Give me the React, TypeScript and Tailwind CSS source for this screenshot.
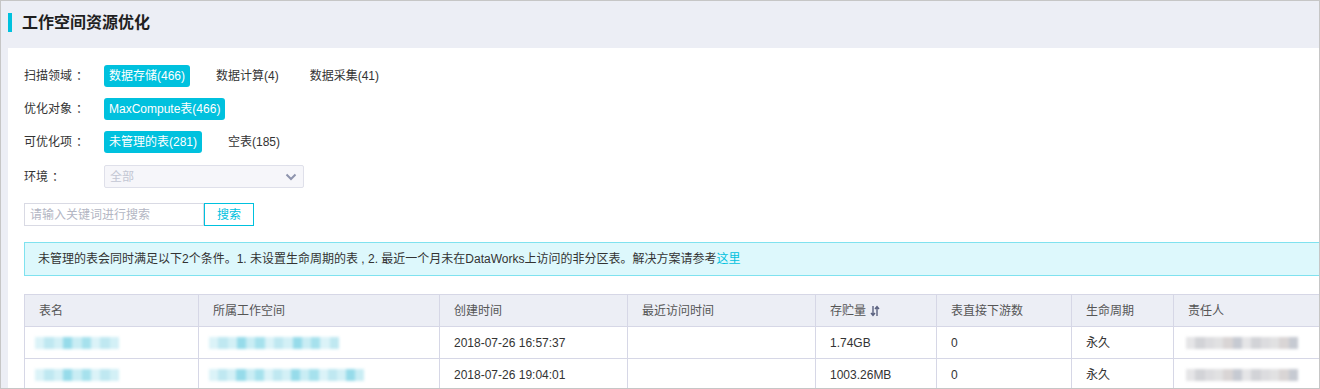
import React from 'react';

const filters = [
  { label: '扫描领域', tags: ['数据存储(466)', '数据计算(4)', '数据采集(41)'] },
  { label: '优化对象', tags: ['MaxCompute表(466)'] },
  { label: '可优化项', tags: ['未管理的表(281)', '空表(185)'] },
];

const columns = [
  { title: '表名', width: 174 },
  { title: '所属工作空间', width: 241 },
  { title: '创建时间', width: 188 },
  { title: '最近访问时间', width: 188 },
  { title: '存贮量', width: 121, sort: true },
  { title: '表直接下游数', width: 135 },
  { title: '生命周期', width: 102 },
  { title: '责任人', width: 260 },
];

const rows = [
  { created: '2018-07-26 16:57:37', size: '1.74GB', name: 84, space: 130, owner: 112 },
  { created: '2018-07-26 19:04:01', size: '1003.26MB', name: 84, space: 155, owner: 112 },
];

// 打码的内容，用模糊色块代替
function Blurred({ width, tone }: { width: number; tone: 'cyan' | 'gray' }) {
  const shades =
    tone === 'cyan'
      ? ['#d3f0f6', '#bfe8f1', '#dbf3f8', '#a6e1ed', '#c9edf4', '#96dbea']
      : ['#dcdcdf', '#d2d3d7', '#e5e5e7', '#c6cad2', '#d9d5d5', '#e1e1e2'];
  const n = Math.round(width / 9);
  return (
    <div className="flex h-[12px] blur-[1.5px]" style={{ width }}>
      {Array.from({ length: n }).map((_, i) => (
        <div key={i} className="h-full flex-1" style={{ background: shades[(i * 5 + 2) % shades.length] }} />
      ))}
    </div>
  );
}

function SortIcon() {
  return (
    <svg className="ml-[4px] h-[12px] w-[10px]" viewBox="0 0 10 12" fill="none" stroke="#5b6280" strokeWidth="1.4">
      <path d="M3 1v9M1 8l2 2.5L5 8" />
      <path d="M7 11V2M5 4l2-2.5L9 4" />
    </svg>
  );
}

function Label({ text }: { text: string }) {
  return (
    <span className="flex w-[80px]">
      {text}
      <span className="ml-[4px]">：</span>
    </span>
  );
}

export default function App() {
  return (
    <div className="h-[389px] w-[1320px] overflow-hidden border border-[#c6c6c6] bg-[#eceef5] font-['Liberation_Sans','Noto_Sans_CJK_SC',sans-serif] text-[12px] text-[#333]">
      <header className="flex h-[47px] items-start">
        <span className="ml-[7px] mt-[12px] h-[19px] w-[4px] bg-[#00c1de]" />
        <h1 className="ml-[10px] mt-[12px] text-[16px] font-bold leading-[19px] text-[#1f1f1f]">工作空间资源优化</h1>
      </header>

      <main className="ml-[7px] h-[340px] bg-white pl-[16px] pt-[17px]">
        {filters.map((f, i) => (
          <div key={f.label} className={`flex h-[22px] items-center ${i > 0 ? 'mt-[11px]' : ''}`}>
            <Label text={f.label} />
            <div className="flex items-center gap-[21px]">
              {f.tags.map((t, j) => (
                <span
                  key={t}
                  className={
                    j === 0
                      ? 'flex h-[22px] items-center rounded-[3px] bg-[#00c1de] px-[5px] text-white'
                      : 'flex h-[22px] items-center px-[5px] text-[#333]'
                  }
                >
                  {t}
                </span>
              ))}
            </div>
          </div>
        ))}

        <div className="mt-[12px] flex h-[23px] items-center">
          <Label text="环境" />
          <div className="flex h-[23px] w-[200px] items-center justify-between rounded-[2px] border border-[#dfe0ea] bg-[#f6f6fa] pl-[5px] pr-[6px] text-[#c3c6d3]">
            <span>全部</span>
            <svg className="h-[8px] w-[12px]" viewBox="0 0 12 8" fill="none" stroke="#8e94ad" strokeWidth="2">
              <path d="M1.5 1.5L6 6l4.5-4.5" />
            </svg>
          </div>
        </div>

        <div className="mt-[15px] flex h-[23px]">
          <div className="flex w-[180px] items-center border border-[#d9dae4] pl-[5px] text-[#b3b6c3]">请输入关键词进行搜索</div>
          <button type="button" className="w-[50px] border border-[#00c1de] text-[#00c1de]">
            搜索
          </button>
        </div>

        <div className="mt-[16px] flex h-[34px] w-[1320px] items-center border border-[#7fe2ef] bg-[#ddf8fc] pl-[13px]">
          未管理的表会同时满足以下2个条件。1. 未设置生命周期的表 , 2. 最近一个月未在DataWorks上访问的非分区表。解决方案请参考
          <a href="#" className="text-[#00c1de]">这里</a>
        </div>

        <table className="mt-[18px] table-fixed border-collapse" style={{ width: 1409 }}>
          <colgroup>
            {columns.map((c) => (
              <col key={c.title} style={{ width: c.width }} />
            ))}
          </colgroup>
          <thead>
            <tr className="h-[32px] bg-[#eceef5] text-[#555]">
              {columns.map((c) => (
                <th key={c.title} className="border border-[#d6d7e6] pl-[14px] text-left font-normal">
                  <span className="flex items-center">
                    {c.title}
                    {c.sort && <SortIcon />}
                  </span>
                </th>
              ))}
            </tr>
          </thead>
          <tbody>
            {rows.map((r) => (
              <tr key={r.created} className="h-[32px]">
                <td className="border border-[#d6d7e6] pl-[10px]">
                  <Blurred width={r.name} tone="cyan" />
                </td>
                <td className="border border-[#d6d7e6] pl-[10px]">
                  <Blurred width={r.space} tone="cyan" />
                </td>
                <td className="border border-[#d6d7e6] pl-[14px]">{r.created}</td>
                <td className="border border-[#d6d7e6]" />
                <td className="border border-[#d6d7e6] pl-[14px]">{r.size}</td>
                <td className="border border-[#d6d7e6] pl-[14px]">0</td>
                <td className="border border-[#d6d7e6] pl-[14px]">永久</td>
                <td className="border border-[#d6d7e6] pl-[12px]">
                  <Blurred width={r.owner} tone="gray" />
                </td>
              </tr>
            ))}
          </tbody>
        </table>
      </main>
    </div>
  );
}
